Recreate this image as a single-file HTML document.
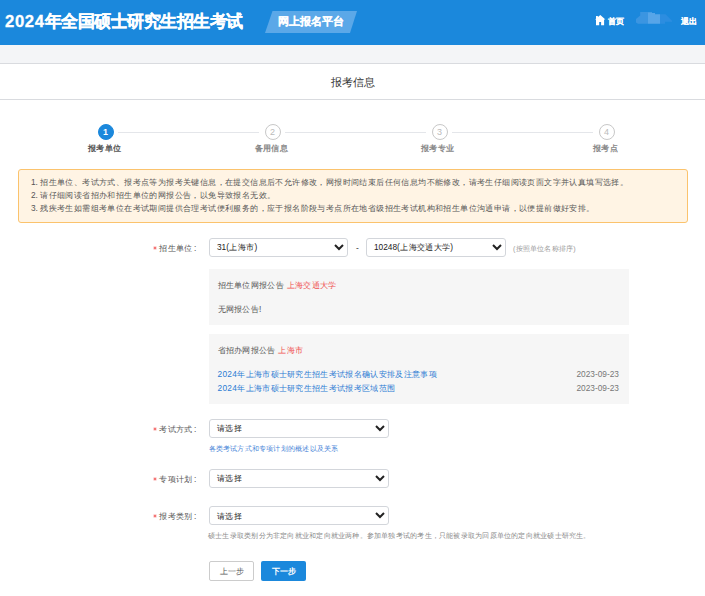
<!DOCTYPE html>
<html>
<head>
<meta charset="utf-8">
<style>
*{margin:0;padding:0;box-sizing:border-box;}
html,body{width:705px;height:596px;overflow:hidden;background:#fff;}
body{font-family:"Liberation Sans",sans-serif;position:relative;color:#555;}
.a{position:absolute;white-space:nowrap;}
.hdr{left:0;top:0;width:705px;height:45px;background:#1b88dc;}
.title{left:5px;top:10px;font-size:16.7px;letter-spacing:-0.5px;line-height:24px;font-weight:bold;color:#fff;-webkit-text-stroke:0.3px #fff;}
.band{left:0;top:45px;width:705px;height:18px;background:#f4f5f7;}
.bar{left:0;top:63px;width:705px;height:37px;border-top:1px solid #d9dbdf;border-bottom:1px solid #d9dbdf;background:#fff;}
.ptitle{left:331px;top:74px;font-size:11px;line-height:16px;color:#333;}
.circ{width:16px;height:16px;border-radius:50%;border:1px solid #c8c8c8;text-align:center;font-size:9px;line-height:14px;color:#bbb;}
.circ.on{background:#1b88dc;border-color:#1b88dc;color:#fff;}
.sline{height:1px;background:#e4e6ea;top:132px;}
.slab{font-size:8.3px;letter-spacing:0.35px;line-height:12px;font-weight:bold;color:#888;top:142px;}
.notice{left:18px;top:169px;width:670px;height:54px;border:1px solid #fbc36d;background:#fff4e4;border-radius:3px;}
.ntx{left:31px;font-size:8.3px;letter-spacing:0.4px;line-height:12px;color:#555;}
.lbl{font-size:8.3px;letter-spacing:0.32px;line-height:12px;color:#555;}
.star{color:#f0504f;}
.sel{border:1px solid #d3d6db;border-radius:3px;background:#fff;height:19px;}
.sel span{position:absolute;left:7px;top:2px;font-size:8.3px;letter-spacing:0.35px;line-height:12px;color:#222;}
.chev{position:absolute;top:5px;width:10px;height:7px;}
.gbox{background:#f6f6f6;left:209px;width:420px;}
.red{color:#f0504f;}
.lnk{color:#2b7bd3;}
.hint{font-size:7.1px;letter-spacing:0.22px;line-height:10px;color:#888;}
.btn{top:561px;height:20px;border-radius:2px;text-align:center;font-size:8.3px;line-height:18px;}
</style>
</head>
<body>
<div class="a hdr"></div>
<div class="a title"><span style="letter-spacing:0.6px">2024</span>年全国硕士研究生招生考试</div>
<svg class="a" style="left:264px;top:11px" width="94" height="22"><polygon points="8.5,0 93,0 86,22 1,22" fill="#5ba8e8"/></svg>
<div class="a" style="left:278px;top:14px;font-size:10.8px;line-height:14px;font-weight:bold;color:#fff;-webkit-text-stroke:0.2px #fff;">网上报名平台</div>
<!-- home icon -->
<svg class="a" style="left:592px;top:12px" width="16" height="16" viewBox="0 0 16 16"><path d="M3 7.6 L8.3 3.1 L13.4 7.6 L12.1 7.6 L12.1 13.2 L9.1 13.2 L9.1 9.9 L7.2 9.9 L7.2 13.2 L4 13.2 L4 7.6 Z M4 4 H5.9 V6.3 L4 7.9 Z" fill="#fff"/></svg>
<div class="a" style="left:608px;top:15px;font-size:8.3px;line-height:12px;font-weight:bold;color:#fff;-webkit-text-stroke:0.15px #fff;">首页</div>
<svg class="a" style="left:630px;top:6px" width="48" height="24"><polygon points="10.2,6 18,6 18,17.7 8,17.7 6,16.5 6,13 10.2,9.5" fill="#3b95e1"/><polygon points="18,6.2 22,6.2 22,7 25,7 25,8.2 30,8.2 30,17.7 18,17.7" fill="#57a5e8"/><polygon points="30,8.2 35.5,8.2 42,14.8 42,15.7 35,15.7 35,17.7 30,17.7" fill="#2c8de0"/></svg>
<div class="a" style="left:681px;top:15px;font-size:8.3px;line-height:12px;font-weight:bold;color:#fff;-webkit-text-stroke:0.15px #fff;">退出</div>

<div class="a band"></div>
<div class="a bar"></div>
<div class="a ptitle">报考信息</div>

<!-- steps -->
<div class="a circ on" style="left:97.5px;top:124px;font-weight:bold;">1</div>
<div class="a sline" style="left:118px;width:141px;"></div>
<div class="a circ" style="left:264.5px;top:124px;">2</div>
<div class="a sline" style="left:285px;width:141px;"></div>
<div class="a circ" style="left:431.5px;top:124px;">3</div>
<div class="a sline" style="left:452px;width:141px;"></div>
<div class="a circ" style="left:598.5px;top:124px;">4</div>
<div class="a slab" style="left:88px;color:#555;">报考单位</div>
<div class="a slab" style="left:254.5px;">备用信息</div>
<div class="a slab" style="left:421px;">报考专业</div>
<div class="a slab" style="left:593px;">报考点</div>

<div class="a notice"></div>
<div class="a ntx" style="top:176px;"><span style="letter-spacing:0">1. </span>招生单位、考试方式、报考点等为报考关键信息，在提交信息后不允许修改，网报时间结束后任何信息均不能修改，请考生仔细阅读页面文字并认真填写选择。</div>
<div class="a ntx" style="top:189px;"><span style="letter-spacing:0">2. </span>请仔细阅读省招办和招生单位的网报公告，以免导致报名无效。</div>
<div class="a ntx" style="top:202px;"><span style="letter-spacing:0">3. </span>残疾考生如需组考单位在考试期间提供合理考试便利服务的，应于报名阶段与考点所在地省级招生考试机构和招生单位沟通申请，以便提前做好安排。</div>

<!-- row 1 -->
<svg class="a" style="left:153px;top:246px" width="4" height="4" viewBox="0 0 5 5"><path d="M2.5 0.5V4.5M0.7 1.5L4.3 3.5M0.7 3.5L4.3 1.5" stroke="#f26060" stroke-width="1.1"/></svg><div class="a lbl" style="left:159.3px;top:242px;">招生单位<span style="margin-left:1.5px">:</span></div>
<div class="a sel" style="left:209px;top:238px;width:139px;"><span><b style="font-weight:normal;letter-spacing:0">31</b>(上海市)</span><svg class="chev" style="left:124px" viewBox="0 0 10 7"><path d="M1 1 L5 5 L9 1" stroke="#222" stroke-width="2" fill="none"/></svg></div>
<div class="a lbl" style="left:356px;top:242px;color:#333;">-</div>
<div class="a sel" style="left:366px;top:238px;width:140px;"><span><b style="font-weight:normal;letter-spacing:0">10248</b>(上海交通大学)</span><svg class="chev" style="left:125px" viewBox="0 0 10 7"><path d="M1 1 L5 5 L9 1" stroke="#222" stroke-width="2" fill="none"/></svg></div>
<div class="a hint" style="left:513px;top:244px;color:#999;">(按照单位名称排序)</div>

<div class="a gbox" style="top:269px;height:56px;"></div>
<div class="a lbl" style="left:217.5px;top:279px;">招生单位网报公告 <span class="red">上海交通大学</span></div>
<div class="a lbl" style="left:217.5px;top:303px;">无网报公告!</div>

<div class="a gbox" style="top:334px;height:70px;"></div>
<div class="a lbl" style="left:217.5px;top:344px;">省招办网报公告 <span class="red">上海市</span></div>
<div class="a lbl lnk" style="left:217.5px;top:368px;">2024年上海市硕士研究生招生考试报名确认安排及注意事项</div>
<div class="a lbl lnk" style="left:217.5px;top:382px;">2024年上海市硕士研究生招生考试报考区域范围</div>
<div class="a lbl" style="left:576.5px;top:368px;color:#777;letter-spacing:0;">2023-09-23</div>
<div class="a lbl" style="left:576.5px;top:382px;color:#777;letter-spacing:0;">2023-09-23</div>

<!-- row 2 -->
<svg class="a" style="left:153px;top:427px" width="4" height="4" viewBox="0 0 5 5"><path d="M2.5 0.5V4.5M0.7 1.5L4.3 3.5M0.7 3.5L4.3 1.5" stroke="#f26060" stroke-width="1.1"/></svg><div class="a lbl" style="left:159.3px;top:423px;">考试方式<span style="margin-left:1.5px">:</span></div>
<div class="a sel" style="left:209px;top:419px;width:180px;"><span>请选择</span><svg class="chev" style="left:165px" viewBox="0 0 10 7"><path d="M1 1 L5 5 L9 1" stroke="#222" stroke-width="2" fill="none"/></svg></div>
<div class="a hint" style="left:208.5px;top:444px;color:#4a86d8;">各类考试方式和专项计划的概述以及关系</div>

<svg class="a" style="left:153px;top:477px" width="4" height="4" viewBox="0 0 5 5"><path d="M2.5 0.5V4.5M0.7 1.5L4.3 3.5M0.7 3.5L4.3 1.5" stroke="#f26060" stroke-width="1.1"/></svg><div class="a lbl" style="left:159.3px;top:473px;">专项计划<span style="margin-left:1.5px">:</span></div>
<div class="a sel" style="left:209px;top:469px;width:180px;"><span>请选择</span><svg class="chev" style="left:165px" viewBox="0 0 10 7"><path d="M1 1 L5 5 L9 1" stroke="#222" stroke-width="2" fill="none"/></svg></div>

<svg class="a" style="left:153px;top:514px" width="4" height="4" viewBox="0 0 5 5"><path d="M2.5 0.5V4.5M0.7 1.5L4.3 3.5M0.7 3.5L4.3 1.5" stroke="#f26060" stroke-width="1.1"/></svg><div class="a lbl" style="left:159.3px;top:510px;">报考类别<span style="margin-left:1.5px">:</span></div>
<div class="a sel" style="left:209px;top:506px;width:180px;"><span style="top:3px">请选择</span><svg class="chev" style="left:165px" viewBox="0 0 10 7"><path d="M1 1 L5 5 L9 1" stroke="#222" stroke-width="2" fill="none"/></svg></div>
<div class="a hint" style="left:208px;top:531px;">硕士生录取类别分为非定向就业和定向就业两种。参加单独考试的考生，只能被录取为回原单位的定向就业硕士研究生。</div>

<div class="a btn" style="left:209px;width:45px;border:1px solid #ccc;color:#555;background:#fff;">上一步</div>
<div class="a btn" style="left:261px;width:45px;background:#1b88dc;color:#fff;font-weight:bold;line-height:20px;">下一步</div>
</body>
</html>
